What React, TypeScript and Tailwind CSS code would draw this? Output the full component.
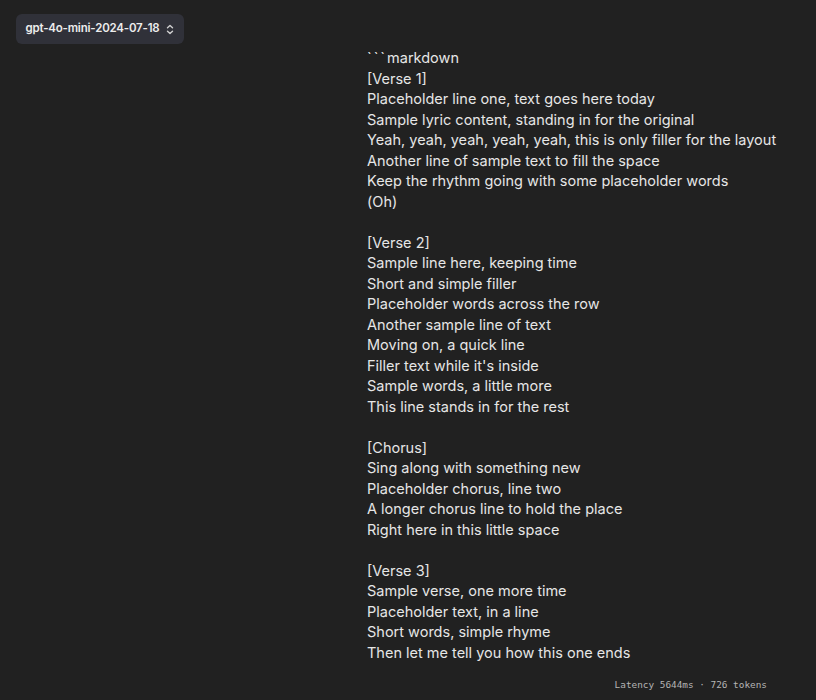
import React from "react";

const lines: string[] = [
  "```markdown",
  "[Verse 1]",
  "Placeholder line one, text goes here today",
  "Sample lyric content, standing in for the original",
  "Yeah, yeah, yeah, yeah, yeah, this is only filler for the layout",
  "Another line of sample text to fill the space",
  "Keep the rhythm going with some placeholder words",
  "(Oh)",
  "",
  "[Verse 2]",
  "Sample line here, keeping time",
  "Short and simple filler",
  "Placeholder words across the row",
  "Another sample line of text",
  "Moving on, a quick line",
  "Filler text while it's inside",
  "Sample words, a little more",
  "This line stands in for the rest",
  "",
  "[Chorus]",
  "Sing along with something new",
  "Placeholder chorus, line two",
  "A longer chorus line to hold the place",
  "Right here in this little space",
  "",
  "[Verse 3]",
  "Sample verse, one more time",
  "Placeholder text, in a line",
  "Short words, simple rhyme",
  "Then let me tell you how this one ends",
];

export default function App() {
  return (
    <div
      className="w-[816px] h-[700px] bg-[#212121] relative overflow-hidden"
      style={{ fontFamily: "Inter, 'Noto Sans', sans-serif" }}
    >
      <div className="pt-[14px] pl-[16px]">
        <button className="h-[30px] w-[168px] rounded-[6px] bg-[#303139] flex items-center justify-center gap-[7px] text-[11.5px] font-semibold text-[#ececec] tracking-[-0.2px]">
          <span>gpt-4o-mini-2024-07-18</span>
          <svg width="8" height="11" viewBox="0 0 8 11" fill="none" stroke="#d0d0d0" strokeWidth="1.4" strokeLinecap="round" strokeLinejoin="round">
            <path d="M1.5 3.8 L4 1.5 L6.5 3.8" />
            <path d="M1.5 7.2 L4 9.5 L6.5 7.2" />
          </svg>
        </button>
      </div>
      <div className="pl-[367px] pt-[4px] text-[14.5px] leading-[20.5px] text-[#e6e6e6]">
        {lines.map((l, i) => (
          <div key={i} className="h-[20.5px] whitespace-pre">
            {l === "```markdown" ? (
              <span>
                <span className="tracking-[2px]">```</span>markdown
              </span>
            ) : (
              l
            )}
          </div>
        ))}
      </div>
      <div
        className="absolute right-[49px] top-[678px] text-[9.4px] text-[#b4b4b4]"
        style={{ fontFamily: "'DejaVu Sans Mono', 'Liberation Mono', monospace" }}
      >
        Latency 5644ms · 726 tokens
      </div>
    </div>
  );
}
